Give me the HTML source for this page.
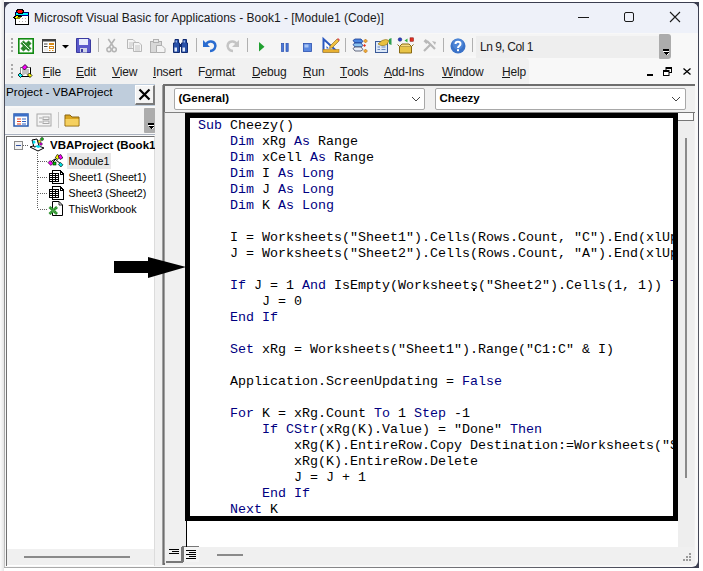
<!DOCTYPE html>
<html><head><meta charset="utf-8">
<style>
*{margin:0;padding:0;box-sizing:border-box}
html,body{width:703px;height:571px;overflow:hidden;background:#fff;font-family:"Liberation Sans",sans-serif;position:relative}
.a{position:absolute}
svg{position:absolute;overflow:visible}
.tt{font-size:12px;color:#1a1a1a;white-space:nowrap;line-height:normal}
.menu{position:absolute;font-size:12px;letter-spacing:-0.2px;color:#1a1a1a;white-space:nowrap;top:65px}
.menu u{text-decoration:none;position:relative}
.menu u:after{content:"";position:absolute;left:0;right:0;top:11.6px;height:1px;background:#1a1a1a}
pre{font-family:"Liberation Mono",monospace;font-size:13.33px;line-height:16px;color:#000}
.k{color:#00007f}
.tr{position:absolute;font-size:10.7px;color:#000;white-space:nowrap}
.sep{position:absolute;top:38px;width:1px;height:14px;background:#b0b0b0}
</style></head><body>
<!-- window -->
<div class="a" style="left:0;top:0;width:4px;height:571px;background:linear-gradient(90deg,#fcfcfc,#e6e6e6)"></div>
<div class="a" style="left:4px;top:2px;width:695px;height:566px;background:linear-gradient(#3b3e50,#4e505c 30%,#5a5c66 70%,#3b3e50)"></div>
<div class="a" style="left:4px;top:2px;width:1px;height:566px;background:linear-gradient(#3b3e50,#50525e 20%,#8a8a8a 45%,#c4c4c4)"></div>
<div class="a" style="left:4px;top:567px;width:695px;height:1px;background:linear-gradient(90deg,#b0b0b0,#909090 40%,#6a6a70 70%,#3b3e50)"></div>
<div class="a" style="left:5px;top:3px;width:693px;height:564px;background:#f8f8f8;border-radius:7px 6px 6px 7px;overflow:hidden">
  <div class="a" style="left:0;top:0;width:693px;height:30px;background:#eef1f9"></div>
</div>
<div class="a" style="left:5px;top:540px;width:12px;height:27px;background:#f8f8f8"></div>
<!-- title -->
<svg style="left:13px;top:7px" width="18" height="19" shape-rendering="crispEdges"><rect x="2" y="5" width="14" height="13" fill="#000"/><rect x="3" y="9" width="12" height="8" fill="#fff"/><rect x="2" y="5" width="14" height="1" fill="#000080"/><rect x="3" y="6" width="12" height="2" fill="#00f0ff"/><rect x="2" y="8" width="14" height="1" fill="#000080"/><g fill="#b0b0b0"><rect x="9" y="11" width="1" height="1"/><rect x="12" y="11" width="1" height="1"/><rect x="6" y="14" width="1" height="1"/><rect x="9" y="14" width="1" height="1"/><rect x="12" y="14" width="1" height="1"/></g><path d="M4 2H9L11 4V6L9 7H5L3 5V3Z" fill="#000"/><path d="M5 3H8L10 4V5L8 6H5L4 5Z" fill="#ff0000"/><path d="M0 10L4 8H7L9 9L7 12H3L1 12Z" fill="#000"/><path d="M1 11L4 9H6L2 11.5Z" fill="#ffff00"/><path d="M4 10H8L6.5 11.5H3.5Z" fill="#909000"/></svg>
<div class="a tt" style="left:34px;top:11px">Microsoft Visual Basic for Applications - Book1 - [Module1 (Code)]</div>
<div class="a" style="left:578px;top:17px;width:11px;height:1px;background:#1a1a1a"></div>
<div class="a" style="left:624px;top:12px;width:10px;height:10px;border:1px solid #1a1a1a;border-radius:2px"></div>
<svg style="left:669px;top:11px" width="12" height="12"><path d="M1 1L11 11M11 1L1 11" stroke="#1a1a1a" stroke-width="1.1"/></svg>

<!-- toolbar band -->
<div class="a" style="left:6px;top:34px;width:665px;height:22px;background:#f5f5f5;border-radius:4px 6px 6px 4px"></div>
<div class="a" style="left:659px;top:34px;width:12px;height:25px;background:#acacac;border-radius:1px 3px 3px 1px"></div>
<svg style="left:662px;top:48px" width="8" height="9" shape-rendering="crispEdges"><rect x="1" y="1" width="6" height="2" fill="#000"/><rect x="1" y="3" width="6" height="1" fill="#fff"/><path d="M1 4H7L4 7Z" fill="#000"/><path d="M4.5 7.5L7 5" stroke="#fff"/></svg>
<svg style="left:11px;top:38px" width="3" height="16"><g fill="#a8a8a8"><rect x="0" y="0" width="2" height="2"/><rect x="0" y="4" width="2" height="2"/><rect x="0" y="8" width="2" height="2"/><rect x="0" y="12" width="2" height="2"/></g></svg>
<svg style="left:18px;top:38px" width="16" height="16"><rect x=".8" y=".8" width="14.4" height="14.4" fill="#fff" stroke="#128a12" stroke-width="1.6"/><path d="M4 4L12 12M12 4L4 12" stroke="#1a7a1a" stroke-width="4.2"/><path d="M4 4L12 12M12 4L4 12" stroke="#60b060" stroke-width="4.2" stroke-dasharray="1 1" opacity=".5"/><path d="M4.5 4.5L11.5 11.5" stroke="#e8f8e8" stroke-width="1"/></svg>
<svg style="left:42px;top:39px" width="14" height="14"><rect x=".5" y=".5" width="13" height="13" fill="#fff" stroke="#404040"/><rect x=".5" y=".5" width="13" height="2" fill="#404040"/><path d="M2 5H5.5M2 7.5H5.5" stroke="#404040" stroke-width="1"/><rect x="2" y="9" width="4" height="3" fill="#ececec"/><rect x="7" y="4" width="5" height="2" fill="#d88a18"/><rect x="7.5" y="7.5" width="4" height="2" fill="none" stroke="#d88a18" stroke-width="1"/><path d="M7 11.5H8.5M10 11.5H11.5" stroke="#d88a18" stroke-width="1"/></svg>
<svg style="left:62px;top:45px" width="7" height="4"><path d="M0 0H7L3.5 3.5Z" fill="#000"/></svg>
<svg style="left:76px;top:38px" width="15" height="15"><path d="M.5 .5H13L14.5 2V14.5H.5Z" fill="#5a5acb" stroke="#3a3aa0"/><rect x="3" y="1" width="9" height="6" fill="#e8eefc"/><rect x="4" y="10" width="7" height="4.5" fill="#d0d4e8"/><rect x="5" y="11" width="2" height="3" fill="#3a3aa0"/></svg>
<div class="sep" style="left:98px"></div>
<svg style="left:106px;top:39px" width="11" height="14"><path d="M2.3 0L8 8.5M8.8 0L3 8.5" stroke="#b4b4b4" stroke-width="1.6"/><circle cx="3" cy="10.6" r="2.1" fill="none" stroke="#b4b4b4" stroke-width="1.5"/><circle cx="8.2" cy="10.6" r="2.1" fill="none" stroke="#b4b4b4" stroke-width="1.5"/></svg>
<svg style="left:127px;top:39px" width="15" height="13"><path d="M.5 .5H6L8 2.5V9.5H.5Z" fill="#f4f4f4" stroke="#b8b8b8"/><path d="M2 4H6M2 6H6M2 8H5" stroke="#c4c4c4"/><path d="M6.5 3.5H12L14.5 6V12.5H6.5Z" fill="#f4f4f4" stroke="#b8b8b8"/><path d="M8 7H13M8 9H13M8 11H13" stroke="#c4c4c4"/></svg>
<svg style="left:150px;top:39px" width="16" height="14"><rect x=".5" y="2.5" width="11" height="11" fill="#d8d8d8" stroke="#b0b0b0"/><rect x="3.5" y=".5" width="5" height="3" fill="#e8e8e8" stroke="#b0b0b0"/><path d="M6.5 6.5H12L15 9.5V13.5H6.5Z" fill="#f4f4f4" stroke="#b0b0b0"/></svg>
<svg style="left:173px;top:39px" width="16" height="14"><path d="M2 .5H5.5V4H6.5V13.5H.5V4H2Z" fill="#2850a8" stroke="#102a70"/><path d="M10 .5H13.5V4H14.5V13.5H8.5V4H10Z" fill="#2850a8" stroke="#102a70"/><rect x="6.5" y="5" width="2" height="3" fill="#102a70"/><rect x="1.5" y="8.5" width="2.5" height="4" fill="#dfe8f8"/><rect x="9.5" y="8.5" width="2.5" height="4" fill="#dfe8f8"/><rect x="2.5" y="1.5" width="1.5" height="2" fill="#90b0e8"/><rect x="10.5" y="1.5" width="1.5" height="2" fill="#90b0e8"/></svg>
<div class="sep" style="left:196px"></div>
<svg style="left:203px;top:39px" width="14" height="13"><path d="M3 6C4 2 10 1 12 5C13.5 8 11 12 7 12" stroke="#2a6cd0" stroke-width="2.6" fill="none"/><path d="M0 1V8H7Z" fill="#2a6cd0"/></svg>
<svg style="left:226px;top:39px" width="13" height="13"><path d="M11 6C10 2 4 1 2 5C.5 8 3 12 7 12" stroke="#c4c4c4" stroke-width="2.6" fill="none"/><path d="M13 1V8H6Z" fill="#c4c4c4"/></svg>
<div class="sep" style="left:247px"></div>
<svg style="left:259px;top:42px" width="6" height="10"><path d="M0 0L5.5 4.8L0 9.6Z" fill="#20a030"/></svg>
<svg style="left:281px;top:43px" width="8" height="9"><rect x=".5" y=".5" width="2.2" height="8" fill="#4a78d8" stroke="#2a50b0" stroke-width=".7"/><rect x="5" y=".5" width="2.2" height="8" fill="#4a78d8" stroke="#2a50b0" stroke-width=".7"/></svg>
<svg style="left:303px;top:43px" width="9" height="9"><rect x=".5" y=".5" width="8" height="8" fill="#5a88e0" stroke="#2a50b0" stroke-width=".8"/><rect x="1.5" y="1.5" width="4" height="3" fill="#a8c4f4"/></svg>
<svg style="left:322px;top:37px" width="18" height="16"><path d="M1.5 2V14.5H15L1.5 2Z" fill="#fff" stroke="#2a58c0" stroke-width="2"/><path d="M4.5 9V11.5H7Z" fill="#2a58c0"/><rect x="1" y="12.5" width="16" height="3" fill="#e8b030" stroke="#a07010" stroke-width=".5"/><path d="M8 9L15 2L17 4L10 11L7.5 11.5Z" fill="#f0c040" stroke="#806010" stroke-width=".6"/><path d="M15 2L16 1L18 3L17 4Z" fill="#e05050"/></svg>
<div class="sep" style="left:345px"></div>
<svg style="left:352px;top:38px" width="17" height="16"><path d="M1 2.5L3 1H9L11 3.5L9 5H3Z" fill="#4a86e0" stroke="#1a3a90" stroke-width=".8"/><path d="M1 6.5L3 5H9L11 7.5L9 9H3Z" fill="#8cc4f0" stroke="#1a3a90" stroke-width=".8"/><path d="M1 10.5L3 9H9L11 11.5L9 13H3Z" fill="#e8eef8" stroke="#404860" stroke-width=".8"/><path d="M13.5 1L15.5 3L13.5 5L11.5 3Z" fill="#f0a830" stroke="#a06010" stroke-width=".5"/><path d="M13.5 11L15.5 13L13.5 15L11.5 13Z" fill="#f0a830" stroke="#a06010" stroke-width=".5"/><path d="M12.5 6L14 7.5L12.5 9L11 7.5Z" fill="#e03020"/></svg>
<svg style="left:375px;top:38px" width="17" height="16"><rect x=".5" y="3.5" width="12" height="11" fill="#dce8f8" stroke="#3a5a98"/><path d="M2.5 9H5M6.5 9H10.5M2.5 11.5H5M6.5 11.5H10.5" stroke="#6a88c0"/><path d="M3 6L7 2.5Q11 .5 14 2.5L12 6.5Q9 8 6 7.5Z" fill="#e8c040" stroke="#8a6a10" stroke-width=".6"/><path d="M14 1L16.5 0V7L14 6Z" fill="#30a050"/></svg>
<svg style="left:398px;top:37px" width="17" height="17"><circle cx="2" cy="2.5" r="1.8" fill="#3040c0" stroke="#102070" stroke-width=".5"/><path d="M6.5 3.5L9.5 1.5V5.5Z" fill="#30b040"/><rect x="12" y=".8" width="3.5" height="3.5" fill="#e03020" stroke="#801010" stroke-width=".5"/><path d="M1.5 9.5H13.5V16H1.5Z" fill="#e8c448" stroke="#8a6a10"/><path d="M1.5 9.5L4 7H11L13.5 9.5" fill="#f6dc80" stroke="#8a6a10"/><path d="M1.5 9.5L-.5 7.5M13.5 9.5L15.5 7.5" stroke="#8a6a10"/></svg>
<svg style="left:423px;top:40px" width="14" height="12"><path d="M1 11L8 4M4 1L12 9" stroke="#b8b8b8" stroke-width="2.2"/><path d="M9 1L13 2L12 5Z" fill="#b8b8b8"/><rect x="1" y="0" width="4" height="3" fill="#b8b8b8" transform="rotate(45 3 1.5)"/></svg>
<div class="sep" style="left:443px"></div>
<svg style="left:450px;top:38px" width="16" height="16"><circle cx="8" cy="8" r="7.5" fill="#3a72c8"/><circle cx="8" cy="6" r="5.5" fill="#5a92e0" opacity=".6"/><path d="M5.5 6C5.5 3 10.5 3 10.5 6C10.5 8 8 8 8 10" stroke="#fff" stroke-width="2" fill="none"/><rect x="7" y="11.2" width="2" height="2" fill="#fff"/></svg>
<div class="sep" style="left:472px"></div>
<div class="a" style="left:476px;top:36px;width:183px;height:22px;background:#eeeeee"></div>
<div class="a tt" style="left:480px;top:40px;letter-spacing:-0.45px">Ln 9, Col 1</div>

<!-- menu row -->
<div class="a" style="left:6px;top:58px;width:523px;height:26px;background:#f1f1f1;border-radius:4px 4px 0 0"></div>
<svg style="left:11px;top:64px" width="3" height="16"><g fill="#a8a8a8"><rect x="0" y="0" width="2" height="2"/><rect x="0" y="4" width="2" height="2"/><rect x="0" y="8" width="2" height="2"/><rect x="0" y="12" width="2" height="2"/></g></svg>
<svg style="left:17px;top:64px" width="16" height="14"><rect x="3.5" y="3.5" width="10" height="9" fill="#fff" stroke="#888"/><path d="M5 5H12V12L8.5 10L5 12Z" fill="#c0c0c0"/><path d="M13.5 3.5V12.5H2.5" stroke="#000" fill="none"/><path d="M8 .5L10.5 3L7.5 6L5 3.5Z" fill="#f0f" stroke="#000" stroke-width=".8"/><path d="M3 9L5.5 11.5L3.5 13.5L1 11Z" fill="#0ff" stroke="#000" stroke-width=".8"/><path d="M12.5 9L15 11.5L13 13.5L10.5 11Z" fill="#ff0" stroke="#000" stroke-width=".8"/></svg>
<div class="menu" style="left:42.5px"><u>F</u>ile</div>
<div class="menu" style="left:76px"><u>E</u>dit</div>
<div class="menu" style="left:112px"><u>V</u>iew</div>
<div class="menu" style="left:153px"><u>I</u>nsert</div>
<div class="menu" style="left:198px">F<u>o</u>rmat</div>
<div class="menu" style="left:252px"><u>D</u>ebug</div>
<div class="menu" style="left:303px"><u>R</u>un</div>
<div class="menu" style="left:340px"><u>T</u>ools</div>
<div class="menu" style="left:384px"><u>A</u>dd-Ins</div>
<div class="menu" style="left:442px"><u>W</u>indow</div>
<div class="menu" style="left:502px"><u>H</u>elp</div>
<div class="a" style="left:647px;top:74px;width:6px;height:2px;background:#000"></div>
<svg style="left:663px;top:67px" width="9" height="9"><rect x="3" y=".5" width="5.5" height="5" fill="none" stroke="#000"/><rect x="3" y=".5" width="5.5" height="1.5" fill="#000"/><rect x=".5" y="3.5" width="5.5" height="5" fill="#fff" stroke="#000"/><rect x=".5" y="3.5" width="5.5" height="1.5" fill="#000"/></svg>
<svg style="left:683px;top:68px" width="8" height="7"><path d="M.5 .5L7.5 6.5M7.5 .5L.5 6.5" stroke="#000" stroke-width="1.3"/></svg>

<!-- project pane -->
<div class="a" style="left:5px;top:84px;width:151px;height:22px;background:#bfcddc"></div>
<div class="a tt" style="left:6px;top:85px;font-size:11.7px;color:#000">Project - VBAProject</div>
<div class="a" style="left:135px;top:85px;width:20px;height:20px;background:#f4f4f4;border-top:1px solid #fff;border-left:1px solid #fff;border-right:2px solid #7a7a7a;border-bottom:2px solid #7a7a7a"></div>
<svg style="left:138px;top:88px" width="13" height="13"><path d="M1.5 1.5L11.5 11.5M11.5 1.5L1.5 11.5" stroke="#000" stroke-width="2.2"/></svg>
<div class="a" style="left:7px;top:108px;width:150px;height:25px;background:#f4f4f4;border-radius:5px"></div>
<div class="a" style="left:144px;top:108px;width:13px;height:25px;background:#acacac;border-radius:1px 3px 3px 1px"></div>
<svg style="left:147px;top:122px" width="8" height="9" shape-rendering="crispEdges"><rect x="1" y="1" width="6" height="2" fill="#000"/><rect x="1" y="3" width="6" height="1" fill="#fff"/><path d="M1 4H7L4 7Z" fill="#000"/><path d="M4.5 7.5L7 5" stroke="#fff"/></svg>
<svg style="left:13px;top:113px" width="16" height="14"><rect x="1" y="1" width="14" height="12" fill="#fff" stroke="#2a5bb0" stroke-width="1.5"/><rect x="1" y="1" width="14" height="2.5" fill="#3b6fc8"/><path d="M4 6H8M4 8.5H8M4 11H8" stroke="#e04020"/><path d="M9 6H13M9 8.5H13M9 11H13" stroke="#3060c0"/></svg>
<svg style="left:36px;top:113px" width="16" height="14"><rect x="1" y="1" width="14" height="12" fill="#f4f4f4" stroke="#a8a8a8"/><rect x="7" y="4" width="6" height="2.5" fill="none" stroke="#a8a8a8"/><rect x="7" y="8" width="6" height="2.5" fill="none" stroke="#a8a8a8"/><path d="M3 5H6M3 9H6" stroke="#a8a8a8"/></svg>
<div class="a" style="left:58px;top:112px;width:1px;height:16px;background:#c8c8c8"></div>
<svg style="left:64px;top:113px" width="17" height="14"><path d="M1 2H6L8 4H15V13H1Z" fill="#d9a520" stroke="#8a6410"/><path d="M1.5 6H14.5V12.5H1.5Z" fill="#f5d060"/></svg>
<!-- tree -->
<div class="a" style="left:5px;top:134px;width:150px;height:1px;background:#aab2c0"></div>
<div class="a" style="left:6px;top:136px;width:149px;height:430px;background:#fff;border-left:1px solid #707070;border-top:1px solid #707070;border-right:1px solid #dcdcdc;overflow:hidden"></div>
<div class="a" style="left:155px;top:84px;width:7px;height:482px;background:#f0f0f0"></div>
<div class="a" style="left:7px;top:549px;width:147px;height:16px;background:#f0f0f0"></div>
<div class="a" style="left:24px;top:556px;width:106px;height:2px;background:#8a8a8a"></div>
<svg style="left:14px;top:141px" width="9" height="9"><rect x=".5" y=".5" width="8" height="8" fill="#f2f2f2" stroke="#8a8a8a"/><path d="M2 4.5H7" stroke="#3050a0"/></svg>
<svg style="left:23px;top:145px" width="30" height="70" shape-rendering="crispEdges"><path d="M0 0.5H6M14.5 8V64M15 16.5H25M15 32.5H25M15 48.5H25M15 64.5H25" stroke="#606060" stroke-dasharray="1 1" fill="none"/></svg>
<svg style="left:29px;top:137px" width="16" height="15"><path d="M1 10L7 8L15 11L9 14Z" fill="#fff" stroke="#000"/><path d="M3 3L8 2L10 9L5 10Z" fill="#fff" stroke="#000"/><path d="M3.5 4L6 3.5L6.5 6L4 7Z" fill="#00e0f0"/><path d="M6 9L9 8L12 10L9 11Z" fill="#00e0f0"/><circle cx="13" cy="2" r="1.5" fill="#20c020" stroke="#000" stroke-width=".5"/><circle cx="10.5" cy="4.5" r="1.3" fill="#ff0" stroke="#000" stroke-width=".5"/><circle cx="12" cy="7" r="1.3" fill="#f0f" stroke="#000" stroke-width=".5"/></svg>
<div class="a" style="left:50px;top:137px;width:105px;height:14px;overflow:hidden"><div class="tr" style="left:0;top:1.5px;font-weight:bold;font-size:11.5px">VBAProject (Book1)</div></div>
<svg style="left:48px;top:154px" width="16" height="13"><path d="M1 9L7 5L14 11M5 8L11 2" stroke="#000" fill="none"/><rect x="8" y="1" width="3" height="4" fill="#ff0" stroke="#000" stroke-width=".6" transform="rotate(30 9.5 3)"/><rect x="11" y="1" width="3" height="4" fill="#f0f" stroke="#000" stroke-width=".6" transform="rotate(-30 12.5 3)"/><rect x="1" y="7" width="3" height="4" fill="#f0f" stroke="#000" stroke-width=".6" transform="rotate(-45 2.5 9)"/><rect x="5" y="8" width="3" height="3" fill="#0c0" stroke="#000" stroke-width=".6"/><rect x="11" y="9" width="3" height="3.5" fill="#0dd" stroke="#000" stroke-width=".6" transform="rotate(-45 12.5 10.5)"/></svg>
<div class="a" style="left:67px;top:153px;width:44px;height:16px;background:#e8e8e8"></div>
<div class="tr" style="left:68.5px;top:155px">Module1</div>
<svg style="left:49px;top:170px" width="16" height="15" shape-rendering="crispEdges"><path d="M3.5 .5H11L14.5 4V13.5H3.5Z" fill="#fff" stroke="#000"/><path d="M11.5 1V4H14" fill="none" stroke="#000"/><rect x=".5" y="3.5" width="9" height="8" fill="#fff" stroke="#000"/><path d="M1 5.5H9M1 7.5H9M1 9.5H9M3.5 4V11M6.5 4V11" stroke="#000"/></svg>
<div class="tr" style="left:68.5px;top:171px">Sheet1 (Sheet1)</div>
<svg style="left:49px;top:186px" width="16" height="15" shape-rendering="crispEdges"><path d="M3.5 .5H11L14.5 4V13.5H3.5Z" fill="#fff" stroke="#000"/><path d="M11.5 1V4H14" fill="none" stroke="#000"/><rect x=".5" y="3.5" width="9" height="8" fill="#fff" stroke="#000"/><path d="M1 5.5H9M1 7.5H9M1 9.5H9M3.5 4V11M6.5 4V11" stroke="#000"/></svg>
<div class="tr" style="left:68.5px;top:187px">Sheet3 (Sheet2)</div>
<svg style="left:48px;top:201px" width="16" height="15"><path d="M4.5 .5H11L14.5 4V14.5H4.5Z" fill="#fff" stroke="#000"/><path d="M11 .5V4H14.5" fill="none" stroke="#000" stroke-width=".8"/><path d="M1.5 6L9 13M9 6L1.5 13" stroke="#1f8a1f" stroke-width="2.6"/><path d="M1.5 6L9 13M9 6L1.5 13" stroke="#7ac07a" stroke-width="2.6" stroke-dasharray="1 1" opacity=".6"/></svg>
<div class="tr" style="left:68.5px;top:203px">ThisWorkbook</div>
<!-- code window frame -->
<div class="a" style="left:162px;top:85px;width:533px;height:480px;background:#f0f0f0;border-left:1px solid #a0a0a0;border-top:1px solid #a0a0a0"></div>
<div class="a" style="left:163px;top:84px;width:2px;height:481px;background:#6e6e6e"></div>
<div class="a" style="left:163px;top:84px;width:532px;height:2px;background:#6e6e6e"></div>
<div class="a" style="left:174px;top:88px;width:251px;height:22px;background:#fff;border:1px solid #a8a8a8;border-radius:2px"></div>
<div class="a" style="left:435px;top:88px;width:251px;height:22px;background:#fff;border:1px solid #a8a8a8;border-radius:2px"></div>
<div class="a" style="left:178.5px;top:91.5px;font-size:11.5px;font-weight:bold;color:#000">(General)</div>
<div class="a" style="left:439.5px;top:91.5px;font-size:11.5px;font-weight:bold;color:#000">Cheezy</div>
<svg style="left:411px;top:96px" width="10" height="7"><path d="M1 1L5 5L9 1" stroke="#444" fill="none"/></svg>
<svg style="left:671px;top:96px" width="10" height="7"><path d="M1 1L5 5L9 1" stroke="#444" fill="none"/></svg>

<!-- code pane -->
<div class="a" style="left:164px;top:112px;width:531px;height:451px;background:#f0f0f0;border-top:1px solid #808080;border-left:1px solid #a0a0a0"></div>
<div class="a" style="left:186px;top:114px;width:492px;height:433px;background:#fff;overflow:hidden">
<pre class="a" style="left:12px;top:4px">
<span class="k">Sub</span> Cheezy()
    <span class="k">Dim</span> xRg <span class="k">As</span> Range
    <span class="k">Dim</span> xCell <span class="k">As</span> Range
    <span class="k">Dim</span> I <span class="k">As</span> <span class="k">Long</span>
    <span class="k">Dim</span> J <span class="k">As</span> <span class="k">Long</span>
    <span class="k">Dim</span> K <span class="k">As</span> <span class="k">Long</span>

    I = Worksheets("Sheet1").Cells(Rows.Count, "C").End(xlUp).Row
    J = Worksheets("Sheet2").Cells(Rows.Count, "A").End(xlUp).Row

    <span class="k">If</span> J = 1 <span class="k">And</span> IsEmpty(Worksheets("Sheet2").Cells(1, 1)) <span class="k">Then</span>
        J = 0
    <span class="k">End</span> <span class="k">If</span>

    <span class="k">Set</span> xRg = Worksheets("Sheet1").Range("C1:C" &amp; I)

    Application.ScreenUpdating = <span class="k">False</span>

    <span class="k">For</span> K = xRg.Count <span class="k">To</span> 1 <span class="k">Step</span> -1
        <span class="k">If</span> <span class="k">CStr</span>(xRg(K).Value) = "Done" <span class="k">Then</span>
            xRg(K).EntireRow.Copy Destination:=Worksheets("Sheet2").Range("A" &amp; J + 1)
            xRg(K).EntireRow.Delete
            J = J + 1
        <span class="k">End</span> <span class="k">If</span>
    <span class="k">Next</span> K
</pre>
</div>
<div class="a" style="left:473px;top:289px;width:2px;height:2px;background:#000"></div>
<!-- vertical scrollbar -->
<div class="a" style="left:678px;top:113px;width:16px;height:434px;background:#eeeeee"></div>
<div class="a" style="left:678px;top:112px;width:17px;height:1px;background:#777"></div>
<div class="a" style="left:678px;top:113px;width:16px;height:8px;background:#fafafa;border-right:1px solid #777;border-bottom:1px solid #777"></div>
<div class="a" style="left:685px;top:138px;width:2px;height:340px;background:#8a8a8a"></div>
<!-- bottom bar -->
<div class="a" style="left:166px;top:547px;width:17px;height:16px;background:#efefef;border-right:2px solid #777;border-bottom:2px solid #777"></div>
<div class="a" style="left:182px;top:546px;width:17px;height:16px;background:#f4f4f4;border-top:1px solid #777;border-left:2px solid #777"></div>
<svg style="left:166px;top:546px" width="34" height="16" shape-rendering="crispEdges"><path d="M3 3.5H13M6 5.5H13M3 7.5H13" stroke="#000" stroke-width="1"/><path d="M20 4.5H30M23 6.5H30M20 8.5H30M23 10.5H30M20 12.5H30" stroke="#000" stroke-width="1"/></svg>
<div class="a" style="left:217px;top:554px;width:26px;height:2px;background:#8a8a8a"></div>
<!-- resize grip -->
<svg style="left:683px;top:553px" width="10" height="10"><g fill="#9a9a9a"><rect x="6" y="0" width="2" height="2"/><rect x="3" y="3" width="2" height="2"/><rect x="6" y="3" width="2" height="2"/><rect x="0" y="6" width="2" height="2"/><rect x="3" y="6" width="2" height="2"/><rect x="6" y="6" width="2" height="2"/></g></svg>
<!-- black rect -->
<div class="a" style="left:185px;top:113px;width:493px;height:408px;border:5px solid #000"></div>
<div class="a" style="left:186px;top:521px;width:1px;height:26px;background:#000"></div>
<!-- arrow -->
<svg style="left:110px;top:250px" width="80" height="35"><path d="M4 11H38V7L76 17L38 28V23H4Z" fill="#000"/></svg>
</body></html>
